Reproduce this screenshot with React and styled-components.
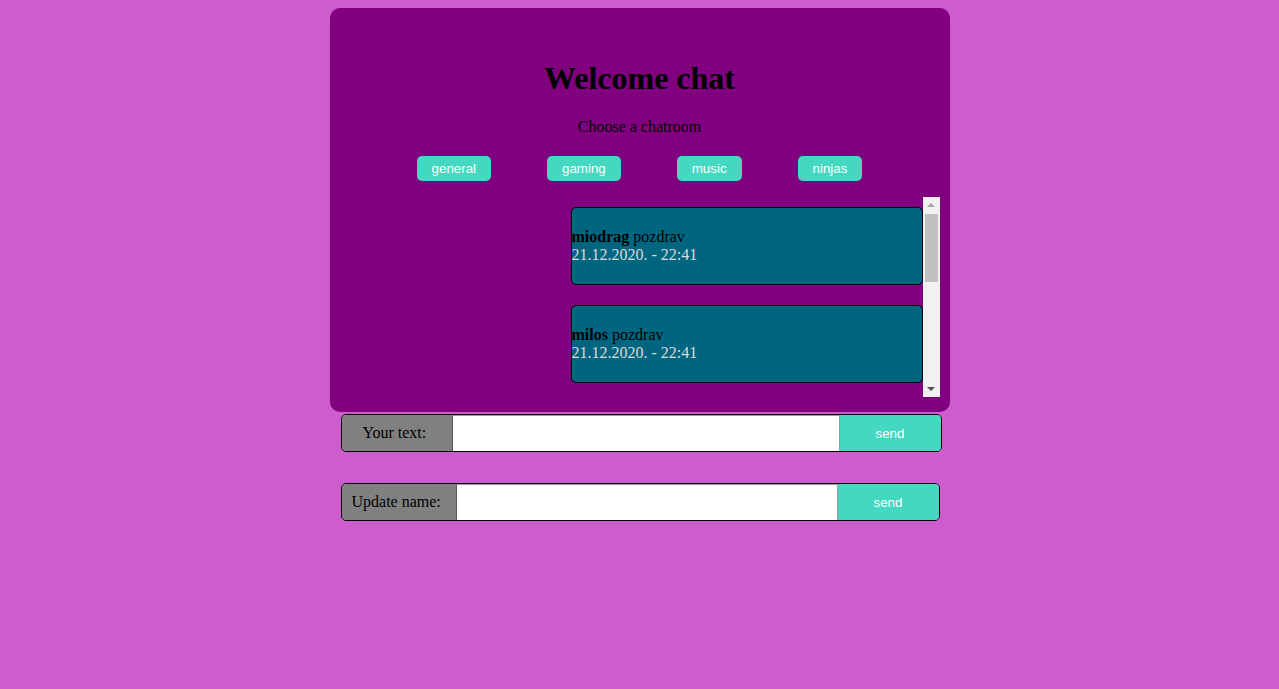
import React from 'react';
import styled, { createGlobalStyle } from 'styled-components';

const GlobalStyle = createGlobalStyle`
  html, body {
    margin: 0;
    padding: 0;
    background: #cd5ccd;
    font-family: "Liberation Serif", "Times New Roman", serif;
    font-size: 16px;
  }
`;

const Page = styled.div`
  width: 620px;
  margin: 0 auto;
  padding-top: 8px;
  height: 681px;
  display: flex;
  flex-direction: column;
  align-items: flex-start;
`;

const Panel = styled.div`
  width: 620px;
  box-sizing: border-box;
  background: #800080;
  border-radius: 10px;
  padding: 31px 10px 15px 10px;
  display: flex;
  flex-direction: column;
  align-items: center;
`;

const Title = styled.h1`
  margin: 21px 0 21px;
  font-size: 32px;
  font-weight: bold;
  line-height: 37px;
  color: #000;
`;

const Subtitle = styled.p`
  margin: 0 0 20px;
  line-height: 18px;
  color: #000;
`;

const Rooms = styled.div`
  display: flex;
  gap: 56px;
  justify-content: center;
  margin-bottom: 16px;
`;

const RoomButton = styled.button`
  height: 25px;
  padding: 0 15px;
  border: none;
  border-radius: 5px;
  background: #45d8c0;
  color: #fff;
  font-family: "Liberation Sans", Arial, sans-serif;
  font-size: 13.33px;
  cursor: pointer;
`;

const ChatBox = styled.div`
  align-self: flex-end;
  display: flex;
  height: 200px;
`;

const MessageList = styled.ul`
  width: 352px;
  height: 200px;
  box-sizing: border-box;
  margin: 0;
  padding: 10px 0;
  list-style: none;
  overflow-y: scroll;
  scrollbar-width: none;
  display: flex;
  flex-direction: column;
  gap: 20px;
`;

const Scrollbar = styled.div`
  width: 17px;
  display: flex;
  flex-direction: column;
  background: #f1f1f1;
`;

const ArrowButton = styled.div`
  height: 17px;
  display: flex;
  align-items: center;
  justify-content: center;
`;

const Arrow = styled.span`
  width: 0;
  height: 0;
  border-left: 4px solid transparent;
  border-right: 4px solid transparent;
  ${p => (p.down
    ? 'border-top: 4px solid #505050; margin-top: 1px;'
    : 'border-bottom: 4px solid #a3a3a3; margin-bottom: 1px;')}
`;

const Track = styled.div`
  flex: 1;
  padding: 0 2px;
`;

const Thumb = styled.div`
  height: 68px;
  background: #c1c1c1;
`;

const Message = styled.li`
  flex: none;
  background: #006680;
  border: 1px solid #000;
  border-radius: 5px;
  padding: 20px 0;
  line-height: 18px;
  color: #000;
`;

const Name = styled.b``;

const Time = styled.div`
  color: #dcdcdc;
`;

const Form = styled.form`
  display: flex;
  width: ${p => p.width}px;
  height: 38px;
  box-sizing: border-box;
  border: 1px solid #000;
  border-radius: 5px;
  overflow: hidden;
  margin: ${p => p.top}px 0 0 11px;
`;

const Label = styled.label`
  flex: none;
  width: ${p => p.width}px;
  box-sizing: border-box;
  padding-left: ${p => p.pad}px;
  background: #808080;
  display: flex;
  align-items: center;
  color: #000;
`;

const Input = styled.input`
  flex: 1;
  min-width: 0;
  border: none;
  border-left: 1px solid #5a5a5a;
  border-top: 1px solid #9a9a9a;
  border-right: 1px solid #9a9a9a;
  background: #fff;
  outline: none;
`;

const SendButton = styled.button`
  flex: none;
  width: 101px;
  border: none;
  background: #45d8c0;
  color: #fff;
  font-family: "Liberation Sans", Arial, sans-serif;
  font-size: 13.33px;
`;

const rooms = ['general', 'gaming', 'music', 'ninjas'];

const messages = [
  { name: 'miodrag', text: 'pozdrav', time: '21.12.2020. - 22:41' },
  { name: 'milos', text: 'pozdrav', time: '21.12.2020. - 22:41' },
  { name: 'ana', text: 'zdravo', time: '21.12.2020. - 22:42' },
  { name: 'marko', text: 'cao', time: '21.12.2020. - 22:43' },
  { name: 'jelena', text: 'pozdrav', time: '21.12.2020. - 22:44' },
];

const App = () => (
  <>
    <GlobalStyle />
    <Page>
      <Panel>
        <Title>Welcome chat</Title>
        <Subtitle>Choose a chatroom</Subtitle>
        <Rooms>
          {rooms.map(r => (
            <RoomButton key={r}>{r}</RoomButton>
          ))}
        </Rooms>
        <ChatBox>
          <MessageList>
            {messages.map((m, i) => (
              <Message key={i}>
                <Name>{m.name}</Name> {m.text}
                <Time>{m.time}</Time>
              </Message>
            ))}
          </MessageList>
          <Scrollbar>
            <ArrowButton><Arrow /></ArrowButton>
            <Track><Thumb /></Track>
            <ArrowButton><Arrow down /></ArrowButton>
          </Scrollbar>
        </ChatBox>
      </Panel>
      <Form width={601} top={2} onSubmit={e => e.preventDefault()}>
        <Label width={110} pad={21}>Your text:</Label>
        <Input type="text" />
        <SendButton>send</SendButton>
      </Form>
      <Form width={599} top={31} onSubmit={e => e.preventDefault()}>
        <Label width={114} pad={10}>Update name:</Label>
        <Input type="text" />
        <SendButton>send</SendButton>
      </Form>
    </Page>
  </>
);

export default App;
